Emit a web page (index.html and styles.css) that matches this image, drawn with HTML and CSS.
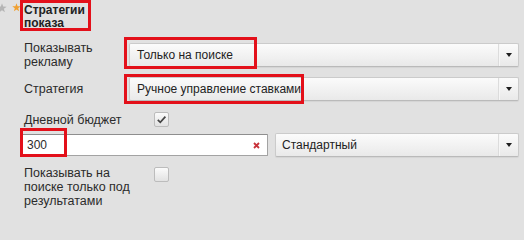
FILE: index.html
```html
<!DOCTYPE html>
<html lang="ru">
<head>
<meta charset="utf-8">
<title>Стратегии показа</title>
<link rel="stylesheet" href="styles.css">
</head>
<body>
<div class="head">
  <svg class="star-gray" viewBox="0 0 10 10"><path d="M5 0.3 L6.2 3.6 L9.7 3.7 L6.9 5.8 L7.9 9.3 L5 7.3 L2.1 9.3 L3.1 5.8 L0.3 3.7 L3.8 3.6 Z" fill="#b5b5b5"/></svg>
  <svg class="star-or" viewBox="0 0 10 10"><path d="M5 0.3 L6.2 3.6 L9.7 3.7 L6.9 5.8 L7.9 9.3 L5 7.3 L2.1 9.3 L3.1 5.8 L0.3 3.7 L3.8 3.6 Z" fill="#f0a030"/></svg>
  <h2 class="title">Стратегии<br>показа</h2>
</div>
<div class="form">
  <div class="row r1">
    <div class="label">Показывать<br>рекламу</div>
    <div class="select">
      <span class="mark m1"></span>
      <span class="value">Только на поиске</span>
      <span class="arrow"><span class="tri"></span></span>
    </div>
  </div>
  <div class="row r2">
    <div class="label">Стратегия</div>
    <div class="select">
      <span class="mark m2"></span>
      <span class="value">Ручное управление ставками</span>
      <span class="arrow"><span class="tri"></span></span>
    </div>
  </div>
  <div class="row r3">
    <div class="label wide">Дневной бюджет</div>
    <span class="check"><svg viewBox="0 0 11 11" width="11" height="11"><path d="M1.8 5.8 L4.3 8.3 L9.4 2.6" fill="none" stroke="#454545" stroke-width="1.7"/></svg></span>
  </div>
  <div class="row r4">
    <div class="input">
      <span class="mark m3"></span>
      <span class="value">300</span>
      <svg class="clear" viewBox="0 0 7 7" width="7" height="7"><path d="M1 1 L6 6 M6 1 L1 6" stroke="#c8323a" stroke-width="1.8"/></svg>
    </div>
    <div class="select s3">
      <span class="value">Стандартный</span>
      <span class="arrow"><span class="tri"></span></span>
    </div>
  </div>
  <div class="row r5">
    <div class="label wide">Показывать на<br>поиске только под<br>результатами</div>
    <span class="check"></span>
  </div>
</div>
</body>
</html>
```
FILE: styles.css
```css
* { box-sizing: border-box; }
body {
  margin: 0;
  width: 524px;
  height: 211px;
  overflow: hidden;
  background: #e1e1e1;
  font: 12.5px "Liberation Sans", Arial, sans-serif;
  color: #2b2b2b;
}
.head {
  display: flex;
  align-items: flex-start;
  height: 31px;
}
.star-gray { width: 10px; height: 10px; margin: 3px 0 0 -3px; flex: none; }
.star-or { width: 9px; height: 9px; margin: 3px 0 0 5px; flex: none; }
.title {
  margin: 0 0 0 -1px;
  width: 71px;
  height: 31px;
  border: 3px solid #e3101a;
  padding: 1px 0 0 1px;
  font-size: 12px;
  font-weight: bold;
  line-height: 13px;
  color: #222;
  white-space: nowrap;
}
.form {
  display: flex;
  flex-direction: column;
  padding: 0 5px 0 24px;
}
.row { display: flex; align-items: center; }
.label { width: 105px; flex: none; line-height: 14px; }
.label.wide { width: 130px; }
.r1 { margin-top: 10px; align-items: flex-start; }
.r1 .select { margin-top: 2px; }
.r2 { margin-top: 8px; }
.r3 { margin-top: 11px; }
.r4 { margin-top: 6px; margin-left: -2px; }
.r5 { margin-top: 9px; align-items: flex-start; }
.r5 .check { margin-top: 1px; }
.value { font-size: 12px; }
.select {
  flex: 1;
  height: 24px;
  position: relative;
  display: flex;
  align-items: center;
  padding-left: 7px;
  border: 1px solid #cbcbcb;
  border-bottom-color: #bababa;
  border-radius: 2px;
  background: linear-gradient(#fbfbfb, #e9e9e9);
  box-shadow: 0 1px 1px rgba(0, 0, 0, 0.06);
  color: #222;
}
.s3 { margin-left: 7px; padding-left: 6px; }
.arrow {
  margin-left: auto;
  width: 20px;
  height: 100%;
  display: flex;
  align-items: center;
  justify-content: center;
  border-left: 1px solid #dcdcdc;
  box-shadow: inset 1px 0 0 #f6f6f6;
}
.tri {
  width: 0;
  height: 0;
  border-left: 3px solid transparent;
  border-right: 3px solid transparent;
  border-top: 4px solid #1e1e1e;
}
.mark {
  position: absolute;
  border: 3px solid #e3101a;
  pointer-events: none;
}
.m1 { left: -6px; top: -7px; width: 133px; height: 32px; }
.m2 { left: -6px; top: -4px; width: 180px; height: 30px; }
.m3 { left: -3px; top: -7px; width: 47px; height: 29px; }
.input {
  width: 246px;
  height: 22px;
  flex: none;
  position: relative;
  display: flex;
  align-items: center;
  padding: 0 7px 0 4px;
  background: #fff;
  border: 1px solid #a3a3a3;
  border-top-color: #8e8e8e;
  border-radius: 1px;
}
.clear { margin-left: auto; }
.check {
  width: 15px;
  height: 15px;
  flex: none;
  display: flex;
  align-items: center;
  justify-content: center;
  border: 1px solid #bcbcbc;
  border-radius: 2px;
  background: linear-gradient(#fbfbfb, #e2e2e2);
}
```
